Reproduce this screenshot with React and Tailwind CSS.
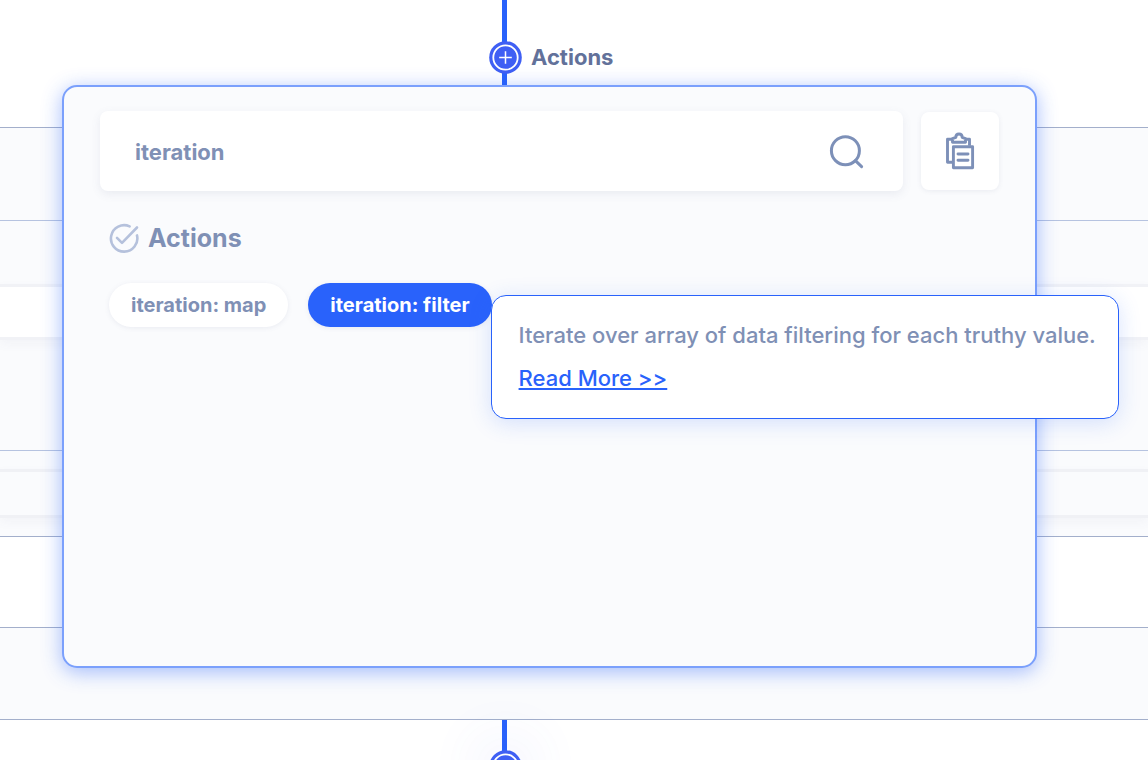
function NodeButton({ label }) {
  return (
    <button type="button" aria-label={label} className="relative block size-[33px] shrink-0 rounded-full">
      <svg viewBox="0 0 33 33" className="block size-[33px]" fill="none" aria-hidden="true">
        <circle cx="16.5" cy="16.5" r="16.3" fill="#3f5ff4" />
        <circle cx="16.5" cy="16.5" r="12.2" stroke="#fff" strokeWidth="1.8" />
        <path d="M16.5 10.2v12.6M10.2 16.5h12.6" stroke="#fff" strokeWidth="1.5" />
      </svg>
    </button>
  );
}

function SearchIcon() {
  return (
    <svg viewBox="0 0 36 36" className="size-9" fill="none" stroke="#7d90b8" strokeWidth="3" strokeLinecap="round" aria-hidden="true">
      <circle cx="16.4" cy="16.7" r="14" />
      <path d="M26.4 26.7l6.2 6" />
    </svg>
  );
}

function PasteIcon() {
  return (
    <svg viewBox="0 0 30 40" className="h-10 w-[30px]" fill="none" stroke="#7d90b8" strokeWidth="2.9" strokeLinejoin="round" aria-hidden="true">
      <path d="M7.5 31.2H2.5V8.3h5M20.5 8.3h4v6.4" />
      <path d="M7.5 11.3V7.6l3.3-1.2c0-4.6 6.4-4.6 6.4 0l3.3 1.2v3.7z" />
      <path d="M8.4 15.7h19.2v21H8.4z" />
      <path d="M13 23h10M13 29.2h10" strokeLinecap="round" />
    </svg>
  );
}

function CheckIcon() {
  return (
    <svg viewBox="0 0 30 30" className="size-[30px]" fill="none" stroke="#b5c1dc" strokeWidth="2.6" strokeLinecap="round" strokeLinejoin="round" aria-hidden="true">
      <path d="M28 12.4A13.2 13.2 0 1 1 20.6 3.4" />
      <path d="M8 14.8l5 5L28 4.5" />
    </svg>
  );
}

export default function App() {
  return (
    <div className="relative flex min-h-screen flex-col overflow-hidden bg-white font-['Inter',sans-serif]">
      <header className="relative flex h-[127px] items-start pt-[41px] pl-[489px]">
        <div className="absolute inset-y-0 left-[502px] w-[5px] bg-[#2962fb]" />
        <NodeButton label="Add action" />
        <h1 className="ml-[9px] text-[22px] leading-8 font-bold text-[#62719a]">Actions</h1>
      </header>

      <div className="border-y border-[#a3afcb] bg-[#fafbfd]">
        <div className="h-[92px]" />
        <div className="border-y border-[#b6c3e0] pt-[63px] pb-[110px]">
          <div className="h-[56px] border-y-[3px] border-[#f1f2f6] bg-white shadow-[0_4px_10px_rgba(90,100,140,0.05)]" />
        </div>
        <div className="pt-[18px] pb-[18px]">
          <div className="h-[49px] border-y-[3px] border-[#f0f1f5] shadow-[0_4px_10px_rgba(90,100,140,0.05)]" />
        </div>
      </div>
      <div className="h-[90px] bg-white" />
      <div className="h-[93px] border-y border-[#a3afcb] bg-[#fafbfd]" />

      <footer className="relative flex min-h-10 flex-1 flex-col">
        <div className="absolute top-0 left-[502px] h-10 w-[5px] bg-[#2962fb]" />
        <div className="absolute top-[30px] left-[489px] rounded-full shadow-[0_0_60px_4px_rgba(80,100,245,0.16)]">
          <NodeButton label="Add next action" />
        </div>
      </footer>

      <main className="absolute top-[85px] right-[111px] left-[62px] min-h-[583px] rounded-[15px] border-2 border-[#7ba0fc] bg-[#fafbfd] px-9 pt-6 shadow-[0_4px_20px_rgba(41,98,251,0.42)]">
        <div className="flex items-center gap-[18px]">
          <label className="flex h-20 min-w-0 flex-1 items-center rounded-lg bg-white pt-px pr-[38px] pl-[35px] shadow-[0_3px_10px_rgba(90,100,140,0.1)]">
            <input
              type="text"
              aria-label="Search actions"
              defaultValue="iteration"
              className="min-w-0 flex-1 bg-transparent text-[22px] leading-7 font-bold text-[#7f90b5] outline-none"
            />
            <SearchIcon />
          </label>
          <button type="button" aria-label="Paste action" className="flex size-[78px] shrink-0 items-center justify-center rounded-lg bg-white shadow-[0_1px_5px_rgba(90,100,140,0.1)]">
            <PasteIcon />
          </button>
        </div>

        <section className="px-[9px] pt-[31px]">
          <h2 className="flex items-center gap-[9px] text-[25px] leading-8 font-bold text-[#7f90b5]">
            <CheckIcon />
            Actions
          </h2>
          <div className="mt-[29px] flex gap-5">
            <button type="button" className="h-11 rounded-full bg-white px-[22px] text-[20px] leading-6 font-bold text-[#7f90b5] shadow-[0_1px_5px_rgba(90,100,140,0.1)]">
              iteration: map
            </button>
            <div className="relative">
              <button type="button" aria-describedby="filter-help" className="h-11 rounded-full bg-[#2962fb] px-[22px] text-[20px] leading-6 font-bold text-white shadow-[0_1px_5px_rgba(90,100,140,0.1)]">
                iteration: filter
              </button>
              <div id="filter-help" role="tooltip" className="absolute top-3 left-full -ml-px h-[124px] rounded-[15px] border border-[#2962fb] bg-white pt-[21px] pr-[22px] pl-[27px] text-[22px] leading-9 font-medium whitespace-nowrap text-[#7f90b5] shadow-[0_4px_22px_rgba(41,98,251,0.18)]">
                <p>Iterate over array of data filtering for each truthy value.</p>
                <a href="#filter" className="mt-[7px] block w-fit text-[#2962fb] underline decoration-2 underline-offset-2">
                  Read More &gt;&gt;
                </a>
              </div>
            </div>
          </div>
        </section>
      </main>
    </div>
  );
}
